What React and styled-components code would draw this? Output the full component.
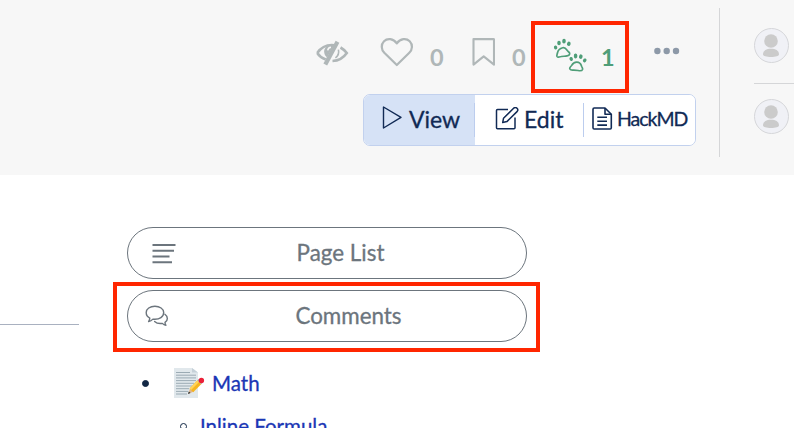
import React from "react";
import styled, { createGlobalStyle } from "styled-components";

const GlobalStyle = createGlobalStyle`
  * { box-sizing: border-box; }
  html, body { margin: 0; background: #fff; overflow: hidden; }
  body { font-family: Lato, "Open Sans", sans-serif; color: #112744; }
`;

const Page = styled.div`
  width: 794px;
  height: 428px;
  overflow: hidden;
  display: flex;
  flex-direction: column;
`;

const Header = styled.header`
  flex: none;
  height: 175px;
  background: #f7f7f7;
  display: flex;
  align-items: flex-start;
`;

const Controls = styled.div`
  width: 719px;
  height: 175px;
  padding: 21px 23px 0 0;
  display: flex;
  flex-direction: column;
  align-items: flex-end;
`;

const ActionRow = styled.div`
  width: 380px;
  height: 73px;
  display: flex;
  align-items: flex-start;
`;

const Action = styled.div`
  position: relative;
  flex: none;
  width: ${(p) => p.$width}px;
  height: 72px;
  padding-left: ${(p) => p.$pad || 0}px;
  display: flex;
  align-items: flex-start;
  color: ${(p) => p.$color || "#b0b7b8"};
`;

const Icon = styled.svg`
  flex: none;
  display: block;
  width: ${(p) => p.$w}px;
  height: ${(p) => p.$h}px;
  margin: ${(p) => p.$top || 0}px 0 0 ${(p) => p.$left || 0}px;
`;

const Count = styled.span`
  font-size: 23.5px;
  font-weight: 700;
  line-height: 28px;
  margin: 22px 0 0 ${(p) => p.$left}px;
`;

const Highlight = styled.div`
  position: absolute;
  inset: ${(p) => p.$inset || "0"};
  border: 4px solid #ff2600;
  pointer-events: none;
`;

const ModeGroup = styled.div`
  width: 333px;
  height: 52px;
  display: flex;
  border: 1px solid #c2d1ee;
  border-radius: 7px;
  background: #fff;
  overflow: hidden;
`;

const ModeButton = styled.button`
  position: relative;
  flex: none;
  width: ${(p) => p.$width}px;
  padding: 0 0 0 ${(p) => p.$pad}px;
  border: 0;
  background: ${(p) => (p.$active ? "#d6e2f6" : "#fff")};
  color: #112a55;
  font: 400 ${(p) => p.$size || 23}px/48px Lato, sans-serif;
  letter-spacing: ${(p) => p.$tracking || 0}px;
  -webkit-text-stroke: 0.3px currentColor;
  display: flex;
  align-items: flex-start;
  &:not(:last-child)::after {
    content: "";
    position: absolute;
    right: 0;
    top: 8px;
    height: 34px;
    width: 1px;
    background: #bccdee;
  }
`;

const ModeLabel = styled.span`
  margin-left: ${(p) => p.$left}px;
`;

const Divider = styled.div`
  flex: none;
  width: 1px;
  height: 149px;
  margin-top: 8px;
  background: #d5d6d8;
`;

const Authors = styled.div`
  flex: 1;
  margin-left: 34px;
  padding-top: 28px;
  overflow: hidden;
`;

const AuthorRow = styled.div`
  height: 71px;
  &:first-child {
    height: 56px;
    border-bottom: 1px solid #d5d6d8;
    margin-bottom: 15px;
  }
`;

const Main = styled.main`
  flex: 1;
  display: flex;
  align-items: flex-start;
`;

const Rule = styled.div`
  width: 79px;
  height: 1px;
  margin: 149px 48px 0 0;
  background: #a9b1c0;
`;

const Sidebar = styled.aside`
  width: 400px;
  padding-top: 52px;
`;

const PillWrap = styled.div`
  position: relative;
  margin-bottom: 11px;
`;

const Pill = styled.button`
  display: flex;
  align-items: flex-start;
  width: 400px;
  height: 52px;
  padding: 0;
  border: 1px solid #6c757d;
  border-radius: 26px;
  background: #fff;
  color: #6c757d;
  font: 400 22.4px/50px Lato, sans-serif;
  -webkit-text-stroke: 0.3px currentColor;
`;

const PillIconBox = styled.span`
  width: 44px;
  flex: none;
`;

const PillLabel = styled.span`
  flex: 1;
  text-align: center;
  padding-right: ${(p) => p.$right}px;
`;

const TocLink = styled.a`
  color: #1b37b5;
  font-size: 20.5px;
  line-height: 30px;
  margin-left: ${(p) => p.$left}px;
  -webkit-text-stroke: 0.3px currentColor;
`;

const TocItem = styled.div`
  display: flex;
  align-items: flex-start;
  height: ${(p) => p.$height}px;
  padding-left: ${(p) => p.$indent}px;
  white-space: nowrap;
`;

const Toc = styled.nav`
  padding-top: 15px;
`;

const Bullet = styled.span`
  flex: none;
  width: 7px;
  height: 7px;
  margin-top: 12px;
  border-radius: 50%;
  background: ${(p) => (p.$hollow ? "transparent" : "#112744")};
  border: 1px solid #112744;
`;

function EyeSlash() {
  return (
    <Icon $w={34} $h={26} $top={19} $left={-1} viewBox="0 0 34 26" fill="none" stroke="currentColor" strokeWidth="2.6">
      <path d="M2.200 13C6 7.500 10.700 5 16.800 5c1.700 0 3 .2 4.300.6M25.500 7.500c2.600 1.500 4.500 3.200 6.300 5.500-3.700 5.400-8.400 7.800-14.300 8M2.200 13c2 3 4.500 5.100 8.500 6.500" />
      <path d="M16 5.400c-4.600 0-7.200 3.200-6.800 6.800.2 2.300 1.200 3.700 2.800 5.200l6.600-11.700z" fill="currentColor" stroke="none" />
      <path d="M12.700 10.300c.3-1.800 1.400-2.900 3.300-3.100" stroke="#f7f7f7" strokeWidth="1.500" />
      <path d="M23.400 9.600c.8 3.200-.3 6.200-3 8.300" strokeWidth="1.600" />
      <path d="M22.500 1.800 10.300 24.400" strokeWidth="4.200" />
    </Icon>
  );
}

function Heart() {
  return (
    <Icon $w={34} $h={30} $top={16} viewBox="0 0 34 30" fill="none" stroke="currentColor" strokeWidth="2.2" strokeLinejoin="round">
      <path d="M16.800 6.400C13.200 1.200 7.300 1 4 4.200.8 7.400 1.100 12.500 4.300 15.800L16.800 28l12.500-12.200c3.300-3.300 3.600-8.400.4-11.600C26.400 1 20.400 1.200 16.800 6.400Z" />
    </Icon>
  );
}

function Bookmark() {
  return (
    <Icon $w={24} $h={30} $top={16} viewBox="0 0 24 30" fill="none" stroke="currentColor" strokeWidth="2.1" strokeLinejoin="round">
      <path d="M2.500 2.100h20q.5 0 .5.5v25L12.700 19.400 2.500 27.600Z" />
    </Icon>
  );
}

function Paws() {
  const toes = [
    [2.6, 9.5, 1.7, 2, -10], [6, 5, 1.8, 2.3, -5], [11, 3.2, 1.8, 2.4, 5], [15.8, 5.8, 1.8, 2.200, 20],
    [18.2, 21, 1.7, 2, -20], [22.6, 18, 1.8, 2.400, -5], [27.8, 18.6, 1.8, 2.300, 15], [31.700, 22.400, 1.700, 2, 25],
  ];
  return (
    <Icon $w={34} $h={34} $top={17} viewBox="0 0 34 34" fill="none" stroke="currentColor" strokeWidth="1.700" strokeLinejoin="round">
      {toes.map(([x, y, rx, ry, angle]) => (
        <ellipse key={x} cx={x} cy={y} rx={rx} ry={ry} transform={`rotate(${angle} ${x} ${y})`} fill="currentColor" stroke="none" />
      ))}
      <path d="M9.700 9.800c-2.800.7-4.600 2.400-5.200 5-.4 1.800-1 2.500-.5 3.500.8 1.500 2.400.6 4.400.2 2.200-.4 3.500-.1 5.600-.6 1.800-.4 3.300-1.500 2.500-3.100-.6-1-1.400-1.100-2.400-2.500-1.200-1.700-2.400-3-4.400-2.500Z" />
      <path d="M23.600 24.200c-2.600.1-3.900 1.500-4.900 3.200-.8 1.200-1.900 1.600-2 2.800-.1 1.700 1.700 2 3.500 1.900 1.800-.1 3.100.1 4.900.4 2 .4 3.900.4 4.400-1.100.4-1.300-.4-1.800-.9-3.200-.8-2.500-2.200-4.100-5-4Z" />
    </Icon>
  );
}

function Dots() {
  return (
    <Icon $w={26} $h={8} $top={26} viewBox="0 0 26 8" fill="#8d99a8">
      <circle cx="3.400" cy="4" r="3.200" />
      <circle cx="12.700" cy="4" r="3.200" />
      <circle cx="22" cy="4" r="3.200" />
    </Icon>
  );
}

function Play() {
  return (
    <Icon $w={20} $h={24} $top={11} viewBox="0 0 20 24" fill="none" stroke="currentColor" strokeWidth="1.4" strokeLinejoin="round">
      <path d="M1.500 1v21L19 11.300Z" />
    </Icon>
  );
}

function Pencil() {
  return (
    <Icon $w={24} $h={24} $top={12} viewBox="0 0 24 24" fill="none" stroke="currentColor" strokeWidth="1.5" strokeLinejoin="round">
      <path d="M13 2.500H2.500q-1 0-1 1v17.200q0 1 1 1h16.500q1 0 1-1V10.500" />
      <path d="m7.700 15.600.8-4.300L18.600 1.300c1.200-1.200 2.600-.8 3.400 0s1.100 2.200 0 3.300L11.900 14.600Z" />
    </Icon>
  );
}

function Document() {
  return (
    <Icon $w={21} $h={24} $top={12} viewBox="0 0 21 24" fill="none" stroke="currentColor" strokeWidth="1.6" strokeLinejoin="round">
      <path d="M13 1H2.200Q1 1 1 2.200v18.500Q1 22 2.200 22h15.900q1.200 0 1.200-1.300V7.200Z" />
      <path d="M13 1v6.200h6.300M5.300 10.300h9.700M5.300 14.200h9.700M5.300 18.100h9.700" />
    </Icon>
  );
}

function Lines() {
  return (
    <Icon $w={24} $h={21} $top={15} $left={24} viewBox="0 0 24 21" stroke="currentColor" strokeWidth="1.900">
      <path d="M.5 2h23M.5 7.700h21.500M.5 13.500h17M.5 19.200h19.500" />
    </Icon>
  );
}

function Chats() {
  return (
    <Icon $w={25} $h={23} $top={13.5} $left={17} viewBox="0 0 25 23" fill="none" stroke="currentColor" strokeWidth="1.4" strokeLinejoin="round" strokeLinecap="round">
      <path d="M9.900 1.200C5 1.200 1.200 4 1.200 7.500c0 2.400 1.300 4.500 3.600 5.600 0 1.500-.4 2.300-1.200 3.500 2-.3 3.100-1.100 4.300-2.500 7 .8 10.800-2.700 10.800-6.600 0-3.600-4-6.300-8.800-6.300Z" />
      <path d="M19.900 9.300c3.200 2.300 3.300 6 .1 8 0 1.300.2 2.200.9 3-1.600-.2-2.500-.8-3.500-1.900-3.200.5-6-.2-7.800-1.900" />
    </Icon>
  );
}

function Avatar() {
  return (
    <Icon $w={35} $h={35} viewBox="0 0 35 35">
      <circle cx="17.500" cy="17.500" r="17" fill="#f0f1f6" stroke="#d5d6d9" />
      <circle cx="17" cy="13" r="6.800" fill="#cbcbcb" />
      <path d="M9 26.300c0-3.700 3.600-5.500 8-5.500s8 1.800 8 5.500c0 1.800-3.500 2.700-8 2.700s-8-.9-8-2.700Z" fill="#cbcbcb" />
    </Icon>
  );
}

function Memo() {
  return (
    <Icon $w={31} $h={31} $left={25} viewBox="0 0 31 31">
      <path d="M0 0h18l6 4.500V30H0Z" fill="#e1e8ec" />
      <path d="m18 0 6 4.500h-6Z" fill="#c5d0d8" />
      <path d="M2 4.500h14M2 7.200h20M2 9.900h20M2 12.600h20M2 15.300h18M2 18h16M2 20.700h13M2 23.400h12M2 26h11" stroke="#93a4ae" strokeWidth=".9" />
      <path d="m14 26 2.300-6.200 3.700 3.700Z" fill="#ddb58d" />
      <path d="m14 26 .8-2.500 1.700 1.600Z" fill="#292f33" />
      <path d="m15.600 20.500 8-8.400 3.800 3.900-8.200 8.300Z" fill="#f6b51f" />
      <path d="m15.600 20.500 8-8.400 1.700 1.700-8.200 8.300Z" fill="#ffd35b" />
      <path d="m23.300 12.300 1.600-1.500 3.800 3.900-1.600 1.500Z" fill="#a9b5bd" />
      <circle cx="27.400" cy="12.500" r="2.700" fill="#eb2038" />
    </Icon>
  );
}

export default function App() {
  return (
    <>
      <GlobalStyle />
      <Page>
        <Header>
          <Controls>
            <ActionRow>
              <Action $width={64}><EyeSlash /></Action>
              <Action $width={91}><Heart /><Count $left={16}>0</Count></Action>
              <Action $width={60}><Bookmark /><Count $left={17}>0</Count></Action>
              <Action $width={98} $pad={22} $color="#4f9e78">
                <Paws /><Count $left={14}>1</Count>
                <Highlight />
              </Action>
              <Action $width={50} $pad={25}><Dots /></Action>
            </ActionRow>
            <ModeGroup>
              <ModeButton $active $width={111} $pad={18}><Play /><ModeLabel $left={7}>View</ModeLabel></ModeButton>
              <ModeButton $width={109} $pad={20}><Pencil /><ModeLabel $left={5}>Edit</ModeLabel></ModeButton>
              <ModeButton $width={111} $pad={8} $size={19.5} $tracking={-1}><Document /><ModeLabel $left={4}>HackMD</ModeLabel></ModeButton>
            </ModeGroup>
          </Controls>
          <Divider />
          <Authors>
            <AuthorRow><Avatar /></AuthorRow>
            <AuthorRow><Avatar /></AuthorRow>
          </Authors>
        </Header>
        <Main>
          <Rule />
          <Sidebar>
            <PillWrap>
              <Pill><PillIconBox><Lines /></PillIconBox><PillLabel $right={17}>Page List</PillLabel></Pill>
            </PillWrap>
            <PillWrap>
              <Pill><PillIconBox><Chats /></PillIconBox><PillLabel $right={1}>Comments</PillLabel></Pill>
              <Highlight $inset="-8px -13px -10px -14px" />
            </PillWrap>
            <Toc>
              <TocItem $height={43} $indent={15}><Bullet /><Memo /><TocLink $left={7}>Math</TocLink></TocItem>
              <TocItem $height={40} $indent={53}><Bullet $hollow /><TocLink $left={13}>Inline Formula</TocLink></TocItem>
            </Toc>
          </Sidebar>
        </Main>
      </Page>
    </>
  );
}
